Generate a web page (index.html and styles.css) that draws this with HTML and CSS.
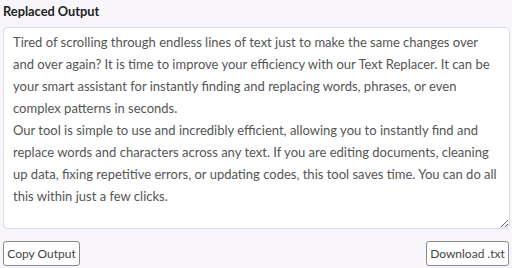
FILE: index.html
```html
<!DOCTYPE html>
<html>
<head>
<meta charset="utf-8">
<link rel="stylesheet" href="styles.css">
</head>
<body>
<div class="panel">
  <label class="title" for="out">Replaced Output</label>
  <textarea id="out" class="output" readonly>Tired of scrolling through endless lines of text just to make the same changes over
and over again? It is time to improve your efficiency with our Text Replacer. It can be
your smart assistant for instantly finding and replacing words, phrases, or even
complex patterns in seconds.
Our tool is simple to use and incredibly efficient, allowing you to instantly find and
replace words and characters across any text. If you are editing documents, cleaning
up data, fixing repetitive errors, or updating codes, this tool saves time. You can do all
this within just a few clicks.</textarea>
  <div class="actions">
    <button class="btn btn-copy">Copy Output</button>
    <button class="btn btn-download">Download .txt</button>
  </div>
</div>
</body>
</html>
```
FILE: styles.css
```css
html, body {
  margin: 0;
  padding: 0;
  background: #f8f6fa;
}
.panel {
  display: flex;
  flex-direction: column;
  padding: 2px 3px 0 3px;
  font-family: Lato, "Noto Sans", sans-serif;
}
.title {
  font-weight: 700;
  font-size: 12.8px;
  color: #222;
  line-height: 18px;
  height: 25px;
}
.output {
  box-sizing: border-box;
  width: 507px;
  height: 202px;
  margin: 0;
  padding: 3px 9px;
  border: 1px solid #dcdce0;
  border-radius: 4px;
  background: #fff;
  font-family: Lato, "Noto Sans", sans-serif;
  font-size: 13px;
  line-height: 22px;
  color: #555;
  white-space: pre;
  resize: vertical;
  overflow: hidden;
}
.actions {
  display: flex;
  justify-content: space-between;
  width: 506px;
  margin-top: 12px;
}
.btn {
  box-sizing: border-box;
  height: 25px;
  padding: 0;
  border: 1px solid #8a8a8a;
  border-radius: 3px;
  background: #fff;
  font-family: Lato, "Noto Sans", sans-serif;
  font-size: 12px;
  color: #444;
  text-align: center;
}
.btn-copy {
  width: 77px;
}
.btn-download {
  width: 83px;
}
```
